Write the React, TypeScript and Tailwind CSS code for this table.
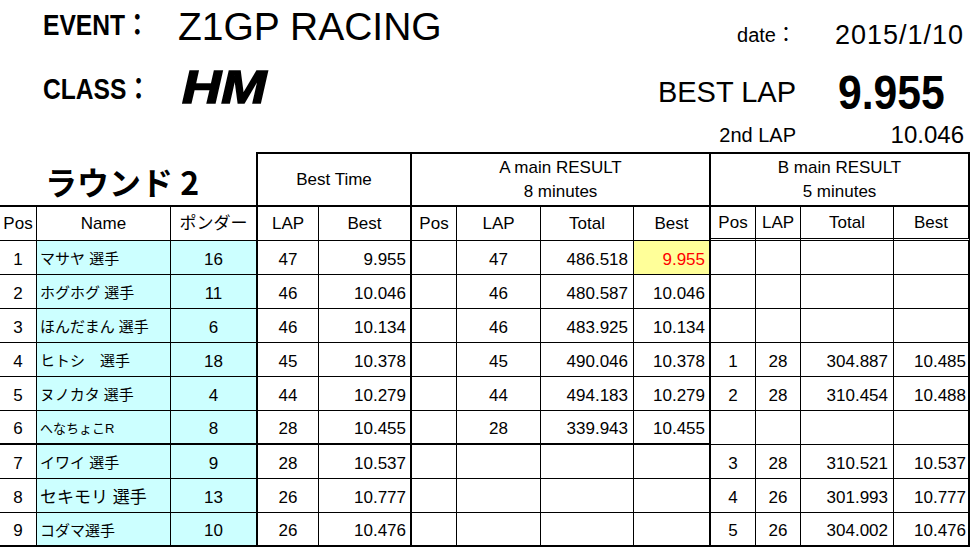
import React from "react";

const FONT = "[font-family:'Liberation_Sans','Noto_Sans_CJK_JP',sans-serif]";
const CJK = "[font-family:'Noto_Sans_CJK_JP',sans-serif]";

const colR = [
  "border-r",
  "border-r",
  "border-r-2",
  "border-r",
  "border-r-2",
  "border-r",
  "border-r",
  "border-r",
  "border-r-2",
  "border-r",
  "border-r",
  "border-r",
  "border-r-2",
];

const colAlign = [
  "justify-center",
  "justify-start pl-[3px]",
  "justify-center",
  "justify-center",
  "justify-end pr-[4px]",
  "justify-center",
  "justify-center",
  "justify-end pr-[5px]",
  "justify-end pr-[4px]",
  "justify-center",
  "justify-center",
  "justify-end pr-[5px]",
  "justify-end pr-[2px]",
];

const heads = ["Pos", "Name", "ポンダー", "LAP", "Best", "Pos", "LAP", "Total", "Best", "Pos", "LAP", "Total", "Best"];

type Row = { cells: string[]; nameSize?: string };

const rows: Row[] = [
  { cells: ["1", "マサヤ 選手", "16", "47", "9.955", "", "47", "486.518", "9.955", "", "", "", ""] },
  { cells: ["2", "ホグホグ 選手", "11", "46", "10.046", "", "46", "480.587", "10.046", "", "", "", ""] },
  { cells: ["3", "ほんだまん 選手", "6", "46", "10.134", "", "46", "483.925", "10.134", "", "", "", ""] },
  { cells: ["4", "ヒトシ　選手", "18", "45", "10.378", "", "45", "490.046", "10.378", "1", "28", "304.887", "10.485"] },
  { cells: ["5", "ヌノカタ 選手", "4", "44", "10.279", "", "44", "494.183", "10.279", "2", "28", "310.454", "10.488"] },
  { cells: ["6", "へなちょこR", "8", "28", "10.455", "", "28", "339.943", "10.455", "", "", "", ""], nameSize: "text-[13px]" },
  { cells: ["7", "イワイ 選手", "9", "28", "10.537", "", "", "", "", "3", "28", "310.521", "10.537"] },
  { cells: ["8", "セキモリ 選手", "13", "26", "10.777", "", "", "", "", "4", "26", "301.993", "10.777"], nameSize: "text-[17px]" },
  { cells: ["9", "コダマ選手", "10", "26", "10.476", "", "", "", "", "5", "26", "304.002", "10.476"] },
];

export default function App() {
  return (
    <div className={`w-[971px] h-[547px] bg-white text-black overflow-hidden ${FONT}`}>
      {/* Top header */}
      <div className="flex h-[152px]">
        <div className="w-[600px] shrink-0 pl-[43px]">
          <div className="h-[52px] flex items-center">
            <div className="w-[135px]">
              <span className="inline-block origin-left scale-x-[0.82] font-bold text-[30px] leading-none whitespace-nowrap">
                EVENT：
              </span>
            </div>
            <span className="text-[39px] leading-none whitespace-nowrap">Z1GP RACING</span>
          </div>
          <div className="mt-[12px] h-[52px] flex items-center">
            <div className="w-[139px]">
              <span className="inline-block origin-left scale-x-[0.82] font-bold text-[30px] leading-none whitespace-nowrap">
                CLASS：
              </span>
            </div>
            <span className="inline-block origin-left scale-x-[1.18] mb-[6px] font-bold italic text-[46px] leading-none [-webkit-text-stroke:1.5px_black]">
              HM
            </span>
          </div>
        </div>
        <div className="flex-1 pt-[20px] pr-[7px]">
          <div className="h-[30px] grid grid-cols-[196px_1fr] items-center">
            <div className="text-right text-[20px] leading-none">date：</div>
            <div className="text-right text-[27px] leading-none tracking-[1px]">2015/1/10</div>
          </div>
          <div className="mt-[16px] h-[52px] grid grid-cols-[196px_1fr] items-center">
            <div className="text-right text-[29px] leading-none pl-[0px]">BEST LAP</div>
            <div className="text-right">
              <span className="inline-block origin-right scale-x-[0.87] mr-[19px] font-bold text-[49px] leading-none">
                9.955
              </span>
            </div>
          </div>
          <div className="mt-[5px] h-[24px] grid grid-cols-[196px_1fr] items-center">
            <div className="text-right text-[20px] leading-none">2nd LAP</div>
            <div className="text-right text-[24px] leading-none">10.046</div>
          </div>
        </div>
      </div>

      {/* Table */}
      <div className="grid grid-cols-[37px_134px_87px_61px_93px_45px_84px_93px_77px_45px_45px_93px_76px] text-[17px]">
        {/* header row 1 */}
        <div className="col-span-3 h-[55px] border-r-2 border-b-2 border-black flex items-center justify-center pr-[12px] pt-[4px]">
          <span className={`${CJK} font-bold text-[32px] leading-none`}>ラウンド 2</span>
        </div>
        <div className="col-span-2 h-[55px] border-t-2 border-r-2 border-b-2 border-black flex items-center justify-center">
          Best Time
        </div>
        <div className="col-span-4 h-[55px] border-t-2 border-r-2 border-b-2 border-black flex flex-col items-center justify-center leading-[24px]">
          <div>A main RESULT</div>
          <div>8 minutes</div>
        </div>
        <div className="col-span-4 h-[55px] border-t-2 border-r-2 border-b-2 border-black flex flex-col items-center justify-center leading-[24px]">
          <div>B main RESULT</div>
          <div>5 minutes</div>
        </div>

        {/* header row 2 */}
        {heads.map((h, i) => (
          <div
            key={"h" + i}
            className={`h-[34px] flex items-center justify-center border-black whitespace-nowrap ${colR[i]} ${
              i >= 9 ? "border-b-[3px] border-double" : "border-b"
            }`}
          >
            {h}
          </div>
        ))}

        {/* data rows */}
        {rows.map((r, ri) =>
          r.cells.map((c, ci) => {
            const bottom = ri === 8 || (ri === 5 && ci <= 8) ? "border-b-2" : "border-b";
            const bg =
              ri === 0 && ci === 8 ? "bg-[#ffff99] text-[#ff0000]" : ci === 1 || ci === 2 ? "bg-[#ccffff]" : "";
            const size = ci === 1 ? r.nameSize ?? "text-[15px]" : "";
            return (
              <div
                key={ri + "-" + ci}
                className={`h-[34px] flex items-center pt-[4px] border-black whitespace-nowrap ${colR[ci]} ${bottom} ${colAlign[ci]} ${bg} ${size}`}
              >
                {c}
              </div>
            );
          })
        )}
      </div>
    </div>
  );
}
